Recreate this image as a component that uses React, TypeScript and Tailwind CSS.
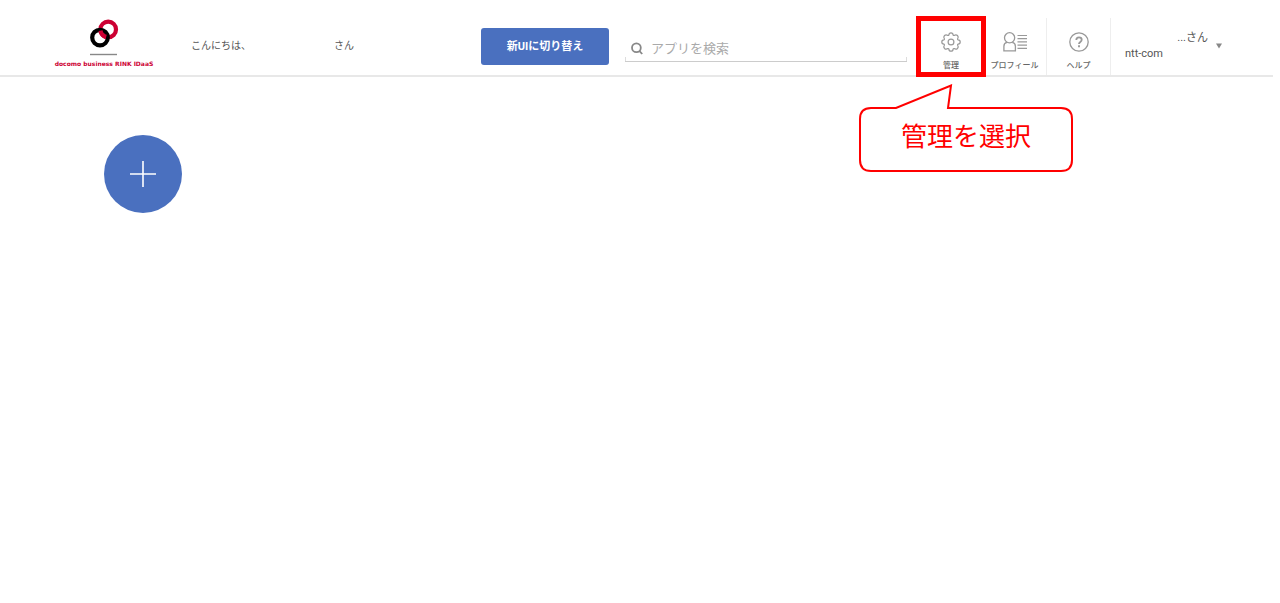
import type { ReactNode } from "react";

function Logo() {
  return (
    <a href="#" className="flex w-28 shrink-0 flex-col items-center text-[#cc0033]">
      <svg width="30" height="38" viewBox="0 0 30 38" fill="none" aria-hidden="true">
        <circle cx="19.2" cy="11.4" r="7.8" stroke="#cc0033" strokeWidth="4.2" />
        <circle cx="11" cy="19.6" r="7.8" stroke="#000" strokeWidth="4.2" />
        <path d="M11.5 12.6 A7.8 7.8 0 0 0 17.2 18.9" stroke="#cc0033" strokeWidth="4.2" />
        <path d="M1 36.5H28" stroke="#888" strokeWidth="1.4" />
      </svg>
      <span className="mt-1 whitespace-nowrap font-['DejaVu_Sans'] text-[6px] leading-2 font-bold">
        docomo business RINK IDaaS
      </span>
    </a>
  );
}

function GearIcon() {
  return (
    <svg width="20" height="20" viewBox="0 0 20 20" fill="none" stroke="#999" strokeWidth="1.2" strokeLinejoin="round" aria-hidden="true">
      <circle cx="10" cy="10" r="2.9" />
      <path d="M7.9 2.9 Q8 0.8 10 0.8 Q12 0.8 12.1 2.9 Q12.4 3.6 13.2 3.4 Q15 2.1 16.5 3.5 Q17.9 5 16.6 6.8 Q16.4 7.6 17.1 7.9 Q19.2 8 19.2 10 Q19.2 12 17.1 12.1 Q16.4 12.4 16.6 13.2 Q17.9 15 16.5 16.5 Q15 17.9 13.2 16.6 Q12.4 16.4 12.1 17.1 Q12 19.2 10 19.2 Q8 19.2 7.9 17.1 Q7.6 16.4 6.8 16.6 Q5 17.9 3.5 16.5 Q2.1 15 3.4 13.2 Q3.6 12.4 2.9 12.1 Q0.8 12 0.8 10 Q0.8 8 2.9 7.9 Q3.6 7.6 3.4 6.8 Q2.1 5 3.5 3.5 Q5 2.1 6.8 3.4 Q7.6 3.6 7.9 2.9 Z" />
    </svg>
  );
}

function ProfileIcon() {
  return (
    <svg width="24" height="20" viewBox="0 0 24 20" fill="none" stroke="#999" strokeWidth="1.3" aria-hidden="true">
      <circle cx="6.6" cy="5.8" r="5.1" />
      <path d="M4 10.3 Q0.9 11 0.9 14.2 V18.9 H12.4 V14.2 Q12.4 11 9.2 10.3" />
      <path d="M14.5 3.5H24 M14.5 6.7H24 M14.5 9.9H24 M14.5 13.1H24 M14.5 16.3H24" strokeWidth="1.2" />
    </svg>
  );
}

function HelpIcon() {
  return (
    <svg width="20" height="20" viewBox="0 0 20 20" fill="none" stroke="#999" aria-hidden="true">
      <circle cx="10" cy="10" r="9.2" strokeWidth="1.3" />
      <path d="M7.3 7.9 Q7.3 5.3 10 5.3 Q12.7 5.3 12.7 7.7 Q12.7 8.9 11.3 9.9 Q10 10.8 10 12" strokeWidth="1.8" />
      <path d="M10 13.3V15.2" strokeWidth="1.9" />
    </svg>
  );
}

function Callout() {
  return (
    <div role="tooltip" className="pointer-events-none absolute top-[66px] -left-[60px] h-[88px] w-[214px]">
      <svg className="absolute inset-0" width="214" height="88" viewBox="0 0 214 88" fill="#fff" stroke="#f00" strokeWidth="2" aria-hidden="true">
        <path d="M12 24 H37 L92 1.5 L89 24 H202 Q213 24 213 35 V76 Q213 87 202 87 H12 Q1 87 1 76 V35 Q1 24 12 24 Z" />
      </svg>
      <p className="relative pt-8 text-center font-['Noto_Sans_CJK_JP',sans-serif] text-[26px] leading-[38px] font-normal text-[#f00]">
        管理を選択
      </p>
    </div>
  );
}

function NavItem({ icon, label, highlighted }: { icon: ReactNode; label: string; highlighted?: boolean }) {
  return (
    <li className={highlighted ? "relative w-16" : "w-16 border-r border-[#eee]"}>
      <button type="button" className="flex h-full w-full flex-col items-center justify-end gap-2 pb-[3px]">
        {icon}
        <span className="whitespace-nowrap text-[8px] leading-3 font-medium text-[#666]">{label}</span>
      </button>
      {highlighted && (
        <>
          <div className="pointer-events-none absolute -inset-x-[3px] -inset-y-0.5 border-5 border-[#f00]" />
          <Callout />
        </>
      )}
    </li>
  );
}

export default function App() {
  return (
    <div className="min-h-screen bg-white pr-[7px] font-['Roboto','Noto_Sans_CJK_JP',sans-serif] text-[#555]">
      <header className="flex border-b-2 border-[#e8e8e8] pt-[18px] pl-12">
        <Logo />
        <p className="flex shrink-0 gap-[83px] pt-5 pl-[31px] text-[10px] leading-4">
          <span>こんにちは、</span>
          <span>さん</span>
        </p>
        <button type="button" className="mt-2.5 ml-[127px] h-[37px] w-32 shrink-0 rounded-[3px] bg-[#4a70bf] pt-0.5 text-[11px] font-bold text-white">
          新UIに切り替え
        </button>
        <label className="relative mt-4 ml-4 flex h-7 min-w-0 flex-1 items-center gap-2 border-b border-[#ccc] pt-0.5 pl-1.5 after:pointer-events-none after:absolute after:inset-x-0 after:bottom-0 after:h-1 after:border-x after:border-[#ddd]">
          <svg width="12" height="13" viewBox="0 0 12 13" fill="none" stroke="#888" strokeWidth="1.8" aria-hidden="true">
            <circle cx="5.4" cy="5.7" r="4.4" />
            <path d="M8.3 8.8L11.2 12" />
          </svg>
          <input
            type="search"
            aria-label="アプリを検索"
            placeholder="アプリを検索"
            className="min-w-0 flex-1 bg-transparent text-[13px] leading-5 outline-none placeholder:text-[#aaa]"
          />
        </label>
        <nav className="ml-3 shrink-0">
          <ul className="flex h-[57px]">
            <NavItem icon={<GearIcon />} label="管理" highlighted />
            <NavItem icon={<ProfileIcon />} label="プロフィール" />
            <NavItem icon={<HelpIcon />} label="ヘルプ" />
          </ul>
        </nav>
        <button type="button" className="flex w-[162px] shrink-0 items-start gap-2 pt-3 pl-3.5 text-left text-[11px] leading-4">
          <span className="flex w-[83px] flex-col">
            <span className="self-end whitespace-nowrap">...さん</span>
            <span>ntt-com</span>
          </span>
          <svg className="mt-[13px]" width="6" height="6" viewBox="0 0 6 6" fill="#888" aria-hidden="true">
            <path d="M0 0.5H6L3 5.5Z" />
          </svg>
        </button>
      </header>
      <main className="px-[104px] pt-[58px]">
        <button type="button" aria-label="アプリを追加" className="flex size-[78px] items-center justify-center rounded-full bg-[#4a70bf]">
          <svg width="26" height="26" viewBox="0 0 26 26" stroke="#fff" strokeWidth="1.6" aria-hidden="true">
            <path d="M13 0V26M0 13H26" />
          </svg>
        </button>
      </main>
    </div>
  );
}
